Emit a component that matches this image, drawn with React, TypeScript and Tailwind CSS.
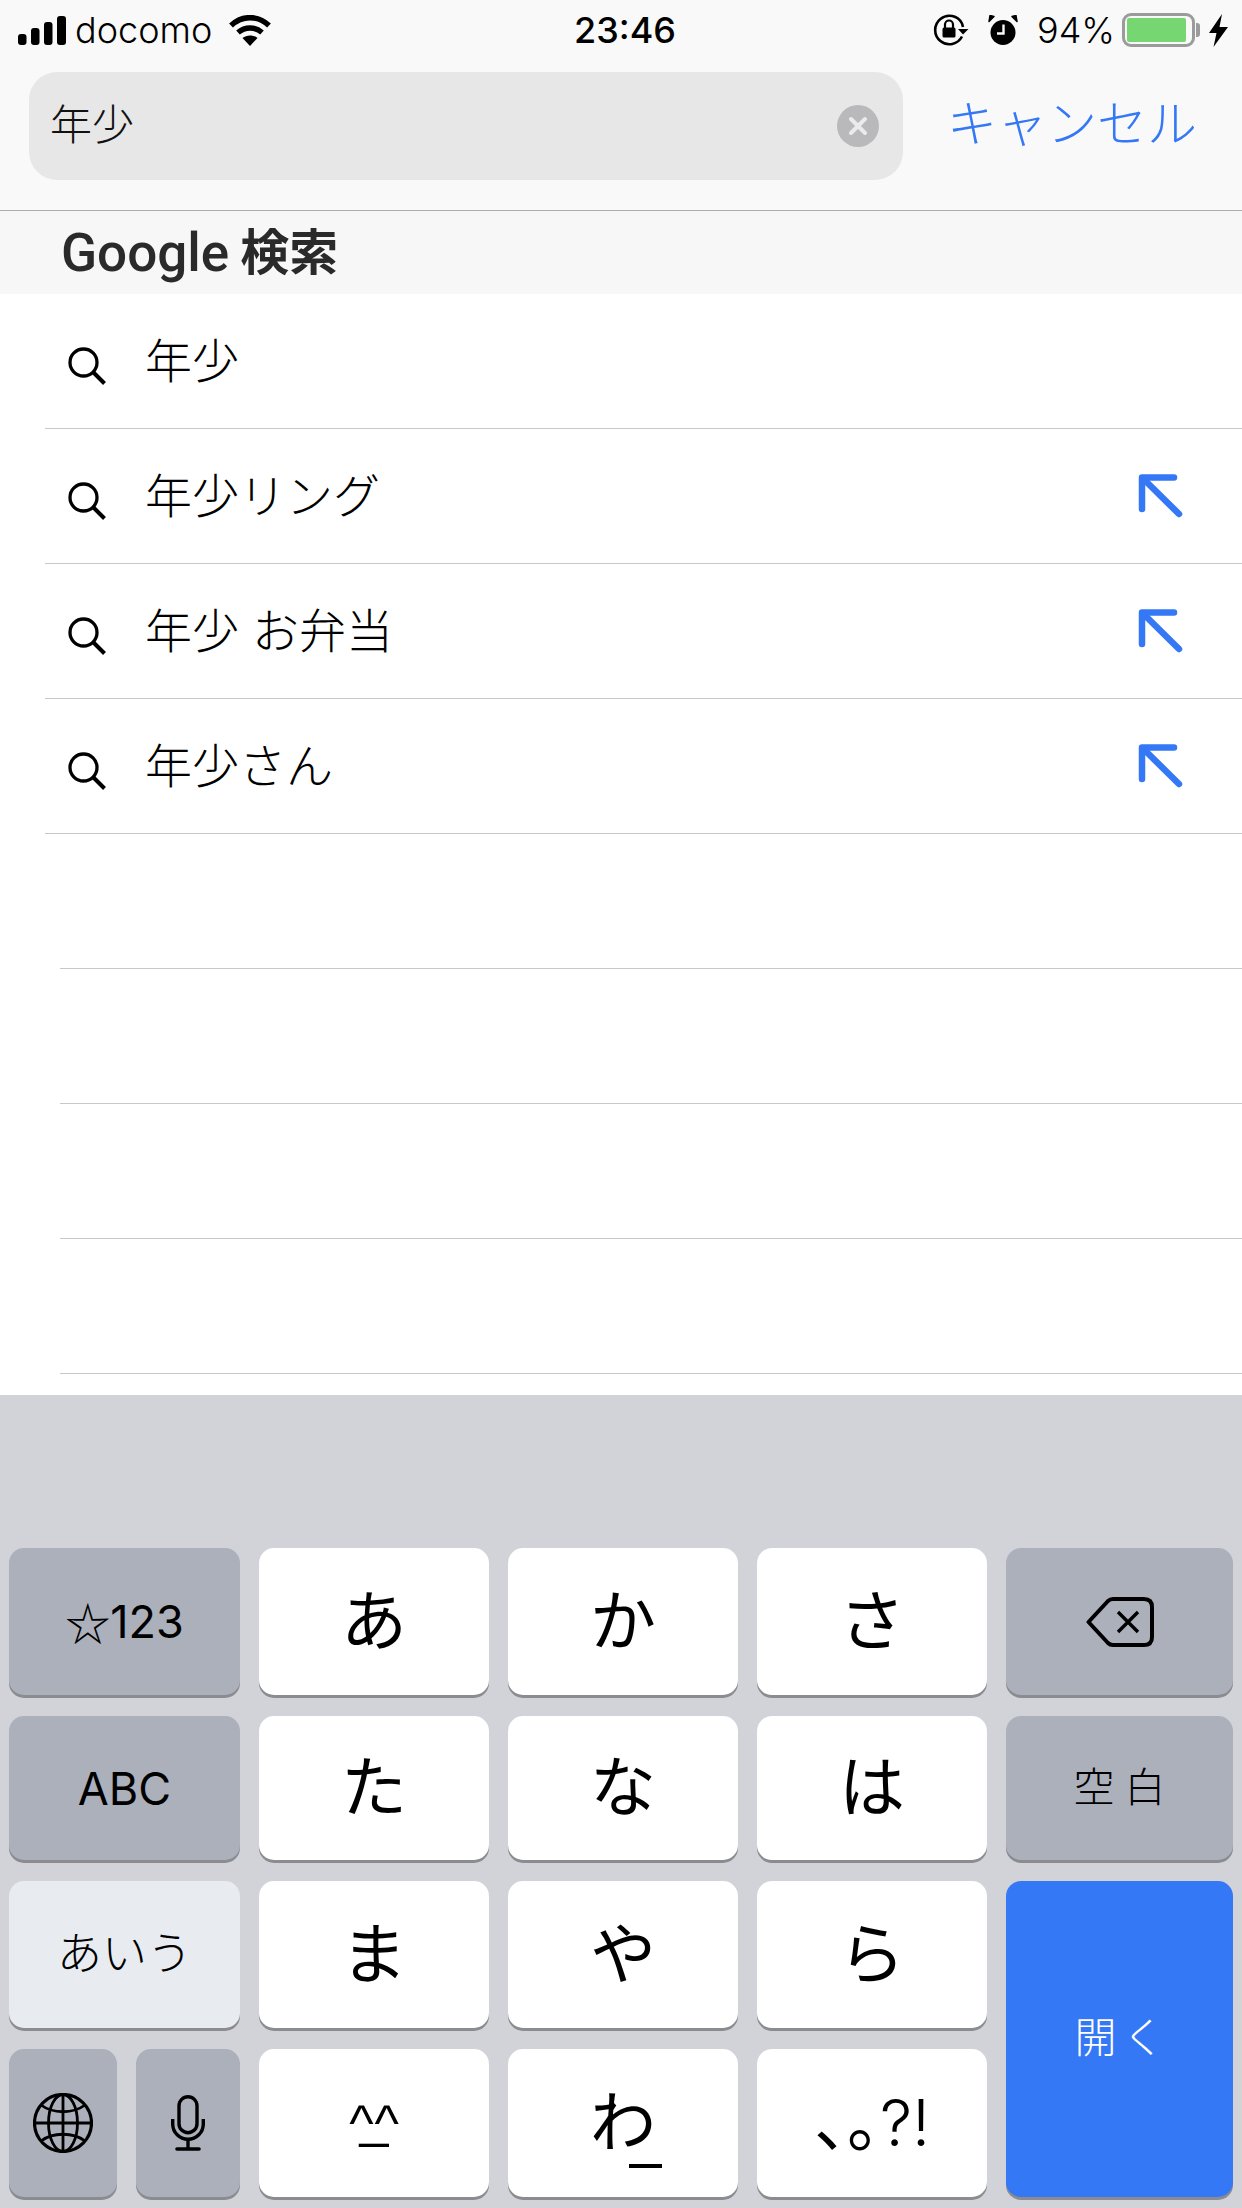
// App.tsx
import React from "react";

const suggestions = [
  { text: "年少", arrow: false },
  { text: "年少リング", arrow: true },
  { text: "年少 お弁当", arrow: true },
  { text: "年少さん", arrow: true },
];

const SearchIcon = () => (
  <svg width="38" height="38" viewBox="0 0 38 38" fill="none" stroke="#000" strokeWidth="3.3" className="mt-[10px] shrink-0">
    <circle cx="15.5" cy="15.5" r="13.5" />
    <path d="M25 25 L36.5 36.5" strokeWidth="4" />
  </svg>
);

const FillArrow = () => (
  <svg width="46" height="46" viewBox="0 0 46 46" fill="none" stroke="#3478f6" strokeWidth="6.5" strokeLinecap="round" strokeLinejoin="round">
    <path d="M4 36 V4.5 H36" />
    <path d="M5 5.5 L41 41" />
  </svg>
);

const Signal = () => (
  <svg width="48" height="29" viewBox="0 0 48 29" fill="#000">
    <rect x="0" y="18" width="8.5" height="11" rx="3" />
    <rect x="13" y="12" width="8.5" height="17" rx="3" />
    <rect x="26" y="6" width="8.5" height="23" rx="3" />
    <rect x="39" y="0" width="9" height="29" rx="3" />
  </svg>
);

const Wifi = () => (
  <svg width="42" height="31" viewBox="0 0 42 31" fill="none" stroke="#000" strokeWidth="5.5">
    <path d="M2 10.5 C13 0 29 0 40 10.5" />
    <path d="M9 17.5 C16 11.5 26 11.5 33 17.5" />
    <path d="M21 31 L13.5 23 C17.5 19.5 24.5 19.5 28.5 23 Z" fill="#000" stroke="none" />
  </svg>
);

const RotationLock = () => (
  <svg width="36" height="32" viewBox="0 0 36 32" fill="none">
    <path d="M29 22.5 A14.2 14.2 0 1 1 29 9.5 L30 13" stroke="#000" strokeWidth="2.6" />
    <path d="M25 15 H35.5 L30 20.5 Z" fill="#000" />
    <rect x="9.5" y="13.5" width="13" height="10" rx="1.5" fill="#000" />
    <path d="M12 14 V10.5 A4 4 0 0 1 20 10.5 V14" stroke="#000" strokeWidth="2.2" />
  </svg>
);

const Alarm = () => (
  <svg width="30" height="31" viewBox="0 0 30 31" fill="none">
    <circle cx="15" cy="17.5" r="12.5" fill="#000" />
    <path d="M1 6.5 L6 1.5 L2 0.5 Z M29 6.5 L24 1.5 L28 0.5 Z" fill="#000" stroke="#000" strokeWidth="1.5" strokeLinejoin="round" />
    <path d="M15.5 9.5 V18.5 H9" stroke="#f9f9f9" strokeWidth="2.4" />
  </svg>
);

const Bolt = () => (
  <svg width="19" height="33" viewBox="0 0 19 33" fill="#000">
    <path d="M13 0 L0 19 H7.5 L4.5 33 L19 13 H10.5 Z" />
  </svg>
);

const Battery = () => (
  <div className="flex items-center">
    <div className="w-[73px] h-[34px] rounded-[9px] border-[3px] border-[#9b9b9b] p-[2px]">
      <div className="w-[59px] h-full rounded-[2px] bg-[#76d672]" />
    </div>
    <div className="w-[4px] h-[14px] rounded-r-[3px] bg-[#9b9b9b] ml-[1px]" />
  </div>
);

const Globe = () => (
  <svg width="60" height="60" viewBox="0 0 60 60" fill="none" stroke="#000" strokeWidth="2.8">
    <circle cx="30" cy="30" r="28.5" strokeWidth="3.2" />
    <ellipse cx="30" cy="30" rx="14.5" ry="28.5" />
    <path d="M30 1.5 V58.5 M1.5 30 H58.5" />
    <path d="M8 12 C20 21 40 21 52 12 M8 48 C20 39 40 39 52 48" />
  </svg>
);

const Mic = () => (
  <svg width="34" height="56" viewBox="0 0 34 56" fill="none" stroke="#000" strokeWidth="3.4">
    <rect x="8" y="1.7" width="18" height="36" rx="9" />
    <path d="M1.7 24 V29 A15.3 15.3 0 0 0 32.3 29 V24" />
    <path d="M17 45 V53" />
    <path d="M6 54 H28" strokeWidth="3.6" strokeLinecap="round" />
  </svg>
);

const Backspace = () => (
  <svg width="68" height="50" viewBox="0 0 68 50" fill="none" stroke="#000" strokeWidth="4" strokeLinejoin="round">
    <path d="M2.5 25 L22 4 Q24 2 27 2 H58 Q66 2 66 10 V40 Q66 48 58 48 H27 Q24 48 22 46 Z" />
    <path d="M32 15 L52 35 M52 15 L32 35" strokeWidth="3.4" />
  </svg>
);

const baseKey =
  "flex items-center justify-center rounded-[15px] shadow-[0_3px_0_#8b8c90] text-black leading-none";
const whiteKey = `${baseKey} bg-white text-[66px]`;
const grayKey = `${baseKey} bg-[#abb0bb]`;
const latinKey = "[font-family:'Inter','Noto_Sans_CJK_JP',sans-serif] text-[45px]";

export default function App() {
  return (
    <div className="w-[1242px] h-[2208px] flex flex-col overflow-hidden bg-white [font-family:'Liberation_Sans','Noto_Sans_CJK_JP',sans-serif]">
      {/* Status bar + search */}
      <div className="h-[211px] shrink-0 bg-[#f9f9f9] border-b border-[#adadad]">
        <div className="h-[60px] grid grid-cols-[1fr_auto_1fr] items-center pl-[18px] pr-[14px] text-black [font-family:'Inter',sans-serif] leading-none">
          <div className="flex items-center">
            <Signal />
            <span className="ml-[9px] text-[36px] font-light mt-[-1px]">docomo</span>
            <span className="ml-[17px]"><Wifi /></span>
          </div>
          <div className="text-[36px] font-medium ml-[4px]">23:46</div>
          <div className="flex items-center justify-end">
            <RotationLock />
            <span className="ml-[19px]"><Alarm /></span>
            <span className="ml-[19px] text-[36px] font-light">94%</span>
            <span className="ml-[7px]"><Battery /></span>
            <span className="ml-[9px]"><Bolt /></span>
          </div>
        </div>
        <div className="flex items-center pl-[29px] mt-[12px]">
          <div className="w-[874px] h-[108px] rounded-[28px] bg-[#e7e7e8] flex items-center pl-[21px] pr-[24px] justify-between">
            <span className="text-[42px] font-light leading-none text-[#111] mt-[-1px]">年少</span>
            <span className="w-[42px] h-[42px] rounded-full bg-[#b9b9bb] flex items-center justify-center">
              <svg width="20" height="20" viewBox="0 0 20 20" stroke="#ebebeb" strokeWidth="4" strokeLinecap="round">
                <path d="M3 3 L17 17 M17 3 L3 17" />
              </svg>
            </span>
          </div>
          <span className="ml-[44px] text-[50px] font-light leading-none text-[#3478f6] mt-[-2px]">キャンセル</span>
        </div>
      </div>

      {/* Section header */}
      <div className="h-[83px] shrink-0 bg-[#f7f7f7] flex items-center pl-[61px] pt-[2px] leading-none text-[#2a2a2a] [font-family:'Roboto','Noto_Sans_CJK_JP',sans-serif] font-medium text-[53px]">
        Google <span className="ml-[11px] text-[49px] font-bold">検索</span>
      </div>

      {/* Suggestions */}
      <div className="flex-1">
        {suggestions.map((s) => (
          <div key={s.text} className="h-[135px] ml-[45px] pl-[23px] pr-[58px] border-b border-[#c8c7cc] flex items-center">
            <SearchIcon />
            <span className="ml-[39px] mt-[1px] text-[47px] font-light leading-none text-black flex-1 whitespace-pre">{s.text}</span>
            {s.arrow && <FillArrow />}
          </div>
        ))}
        {[0, 1, 2, 3].map((i) => (
          <div key={i} className="h-[135px] ml-[60px] border-b border-[#c8c7cc]" />
        ))}
      </div>

      {/* Keyboard */}
      <div className="h-[813px] shrink-0 bg-[#d1d3d9] pt-[153px] pl-[9px] grid grid-cols-[231px_230px_230px_230px_227px] grid-rows-[147px_144px_147px_148px] gap-x-[19px] gap-y-[21px]">
        <div className={`${grayKey} ${latinKey}`}>
          <span className="[font-family:'Noto_Sans_CJK_JP',sans-serif]">☆</span>123
        </div>
        <div className={whiteKey}>あ</div>
        <div className={whiteKey}>か</div>
        <div className={whiteKey}>さ</div>
        <div className={grayKey}><Backspace /></div>

        <div className={`${grayKey} ${latinKey}`}>ABC</div>
        <div className={whiteKey}>た</div>
        <div className={whiteKey}>な</div>
        <div className={whiteKey}>は</div>
        <div className={`${grayKey} text-[41px] font-light pl-[10px] tracking-[10px] text-[#1a1a1a]`}>空白</div>

        <div className={`${baseKey} bg-[#e8ebf0] text-[45px] font-light`}>あいう</div>
        <div className={whiteKey}>ま</div>
        <div className={whiteKey}>や</div>
        <div className={whiteKey}>ら</div>
        <div className={`${baseKey} row-span-2 bg-[#3478f6] text-[42px] font-light text-white pl-[6px] tracking-[6px]`}>開く</div>

        <div className="flex gap-[19px]">
          <div className={`${grayKey} w-[108px]`}><Globe /></div>
          <div className={`${grayKey} w-[104px]`}><Mic /></div>
        </div>
        <div className={`${baseKey} bg-white text-[52px]`}>
          <span>^</span>
          <span className="-mx-[14px] -translate-y-[4px]">_</span>
          <span>^</span>
        </div>
        <div className={`${whiteKey} relative`}>
          わ
          <span className="absolute left-[121px] top-[115px] w-[33px] h-[4px] bg-black" />
        </div>
        <div className={whiteKey}>
          <span className="w-[33px]">、</span>
          <span className="w-[33px]">。</span>
          <span className="text-[64px] font-light [font-family:'Inter',sans-serif]">?!</span>
        </div>
      </div>
    </div>
  );
}
